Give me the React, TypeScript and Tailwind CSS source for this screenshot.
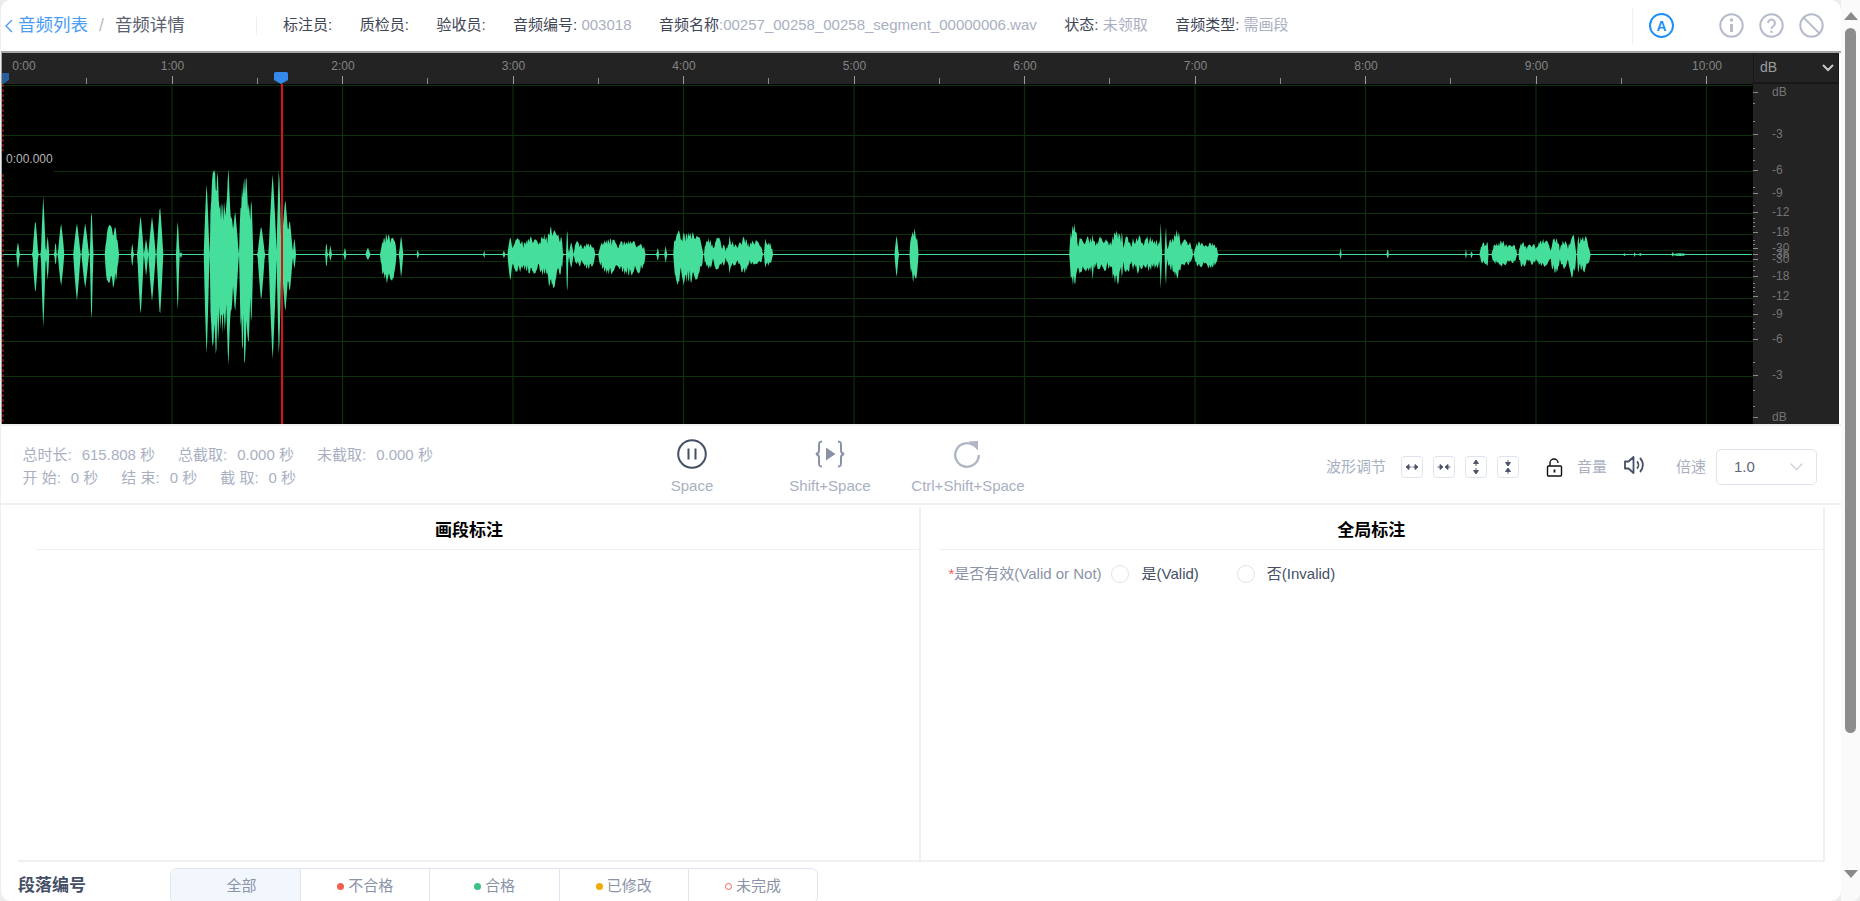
import type { ReactNode } from 'react'

const CENTER = 254.5

// bursts read off the wave: [x, half width, top, bottom], measured on the crops
const crop1 = [
  [48,4,333,420],[92,7,265,495],[112,6,197,595],[123,4,315,455],[143,3,330,410],[157,8,277,470],[197,9,278,515],
  [218,9,278,475],[234,4,224,597],[285,17,282,475],[337,3,335,415],[358,8,253,560],[372,5,325,440],[387,9,258,515],
  [407,8,222,565],[452,4,262,560],[460,3,365,385],[525,7,152,685],[547,14,112,680],[565,30,215,610],[580,8,105,720],
  [597,9,240,550],[622,14,128,705],[638,5,190,600],[663,9,285,515],[692,10,127,695],[708,6,100,695],[724,10,203,550],
  [735,8,265,490],[747,4,322,418],[828,3,332,418],[838,3,342,395],[875,3,350,395],[933,6,352,390],[985,20,312,458],
  [1017,5,315,445],[1059,2,355,390],[1227,2,360,385],[1277,3,360,385],[1293,7,318,455],[1313,13,325,425],
  [1345,18,322,432],[1378,12,315,435],[1398,12,292,473],[1416,8,310,440],[1437,3,285,510],[1447,6,335,415],
  [1465,8,330,410],[1490,13,340,415],[1545,22,325,430],
]
const crop2 = [
  [10,12,330,420],[30,28,333,437],[63,2,345,405],[98,3,350,395],[118,3,345,400],[148,8,300,460],[163,3,290,490],
  [180,25,305,455],[227,9,325,415],[250,9,322,420],[265,6,340,410],[280,3,305,442],[285,12,335,410],[315,12,322,428],
  [338,8,330,405],[350,10,330,405],[370,3,318,420],[378,8,335,405],[702,5,313,445],[746,8,298,455],[1150,8,282,470],
  [1170,8,320,440],[1185,22,322,425],[1198,3,302,462],[1222,14,318,425],[1240,8,335,415],[1258,11,300,460],
  [1272,4,298,450],[1285,8,320,430],[1300,6,322,420],[1315,10,315,430],[1340,12,318,420],[1358,10,330,415],
  [1370,3,275,480],[1383,3,282,475],[1397,8,325,420],[1410,10,303,445],[1433,14,330,405],[1468,10,332,412],[1495,15,337,415],
]
const crop3 = [
  [257,2,350,390],[376,2,350,390],[574,2,355,387],[588,2,360,388],[620,8,335,405],[628,3,325,417],[650,8,340,400],
  [665,12,332,410],[690,10,340,400],[718,8,335,412],[740,10,338,403],[770,15,328,410],[800,9,323,430],[822,8,330,415],
  [842,8,312,440],[858,3,306,440],[872,12,318,425],[882,4,340,405],[975,1,368,380],[1001,2,365,382],[1015,2,366,380],
  [1097,2,362,382],[1115,12,369,378],
]

const toBursts = (crop: number[][], offset: number, widen: number) =>
  crop.map((b) => [
    offset + b[0] / 2.529,
    (b[1] >= 8 ? b[1] * widen : b[1]) / 2.529,
    (373 - b[2]) / 3,
    (b[3] - 373) / 3,
  ])

const bursts = [
  ...toBursts(crop1.slice(0, 40), 0, 1),
  ...toBursts(crop1.slice(40), 0, 1.3),
  ...toBursts(crop2, 620, 1.3),
  ...toBursts(crop3, 1240, 1.3),
]

function rnd(x: number) {
  const n = Math.sin(x * 12.9898) * 43758.5453
  return n - Math.floor(n)
}

// jagged edge, spikes a few pixels wide
function rough(x: number) {
  const spike = Math.abs(Math.sin(x * 0.95 + Math.sin(x * 0.31) * 2.2))
  return 0.6 + 0.42 * spike + 0.14 * (rnd(x) - 0.5)
}

function wavePoints() {
  const top: string[] = []
  const bottom: string[] = []
  for (let x = 3; x <= 1753; x += 0.75) {
    let up = 0.6
    let down = 0.6
    for (const [cx, w, u, d] of bursts) {
      const t = Math.abs(x - cx) / Math.max(w, 0.8)
      if (t < 1) {
        const thin = w < 4
        const s = thin ? Math.pow(1 - t, 0.8) : Math.pow(1 - t * t, 0.45)
        up = Math.max(up, u * s * (thin ? 1 : rough(x)))
        down = Math.max(down, d * s * (thin ? 1 : rough(x + 1.7)))
      }
    }
    top.push(`${x - 3},${(CENTER - 84 - up).toFixed(1)}`)
    bottom.unshift(`${x - 3},${(CENTER - 84 + down).toFixed(1)}`)
  }
  return [...top, ...bottom].join(' ')
}

const WAVE = wavePoints()
const tick = (n: number) => 1 + 170.5 * n
const MINUTES = [0, 1, 2, 3, 4, 5, 6, 7, 8, 9, 10]
const GRID_Y = [85, 135, 171, 196, 213, 234, 250, 261, 277, 298, 316, 341, 376]
const DB_LABELS: [string, number][] = [
  ['dB', 92], ['-3', 134], ['-6', 170], ['-9', 193], ['-12', 212], ['-18', 232], ['-30', 248], ['-36', 254], ['-30', 259],
  ['-18', 276], ['-12', 296], ['-9', 314], ['-6', 339], ['-3', 375], ['dB', 417],
]
const DB_MINOR = [103, 121, 148, 160, 187, 205, 218, 222, 226, 240, 244, 266, 270, 283, 287, 291, 304, 322, 328, 362, 390, 406]

function Ruler() {
  return (
    <div className="relative h-[31px] bg-[#232323]">
      {MINUTES.map((m) => (
        <span
          key={m}
          className="absolute top-[5px] -translate-x-1/2 text-[12px] leading-[16px] text-[#838383]"
          style={{ left: m === 0 ? 22 : tick(m) - 1 }}
        >
          {m}:00
        </span>
      ))}
      {MINUTES.map((m) => (
        <i key={m} className="absolute bottom-0 h-[8px] w-px bg-[#9a9a9a]" style={{ left: tick(m) - 2 }} />
      ))}
      {MINUTES.slice(0, 10).map((m) => (
        <i key={m} className="absolute bottom-0 h-[6px] w-px bg-[#8a8a8a]" style={{ left: tick(m + 0.5) - 2 }} />
      ))}
      <svg className="absolute bottom-0 left-0" width="8" height="12" viewBox="0 0 8 12">
        <path d="M0 1h7v7l-6 4H0z" fill="#2a5d9c" />
      </svg>
      <svg className="absolute bottom-0 left-[272px]" width="14" height="12" viewBox="0 0 14 12">
        <path d="M1.5 0h11A1.5 1.5 0 0 1 14 1.5V8l-7 4-7-4V1.500A1.500 1.500 0 0 1 1.500 0z" fill="#338aea" />
      </svg>
    </div>
  )
}

function WaveCanvas() {
  return (
    <div className="relative h-[340px] bg-black">
      <svg width="1751" height="340" viewBox="0 0 1751 340" className="block">
        {GRID_Y.map((y) => (
          <line key={y} x1="0" x2="1751" y1={y - 84 + 0.5} y2={y - 84 + 0.5} stroke="#0b300b" strokeWidth="1.2" />
        ))}
        {MINUTES.slice(1).map((m) => (
          <line key={m} x1={tick(m) - 1.5} x2={tick(m) - 1.5} y1="0" y2="340" stroke="#0b300b" strokeWidth="1.2" />
        ))}
        <polygon points={WAVE} fill="#45de9a" />
        <line x1="1" x2="1" y1="0" y2="340" stroke="#d81e1e" strokeWidth="1" strokeDasharray="3 2" />
        <line x1="280" x2="280" y1="0" y2="340" stroke="#e01010" strokeWidth="2" />
      </svg>
      <span className="absolute left-0 top-[67px] h-[21px] w-[52px] bg-black pl-[4px] text-[12px] leading-[16px] text-[#b5b5b5]">
        0:00.000
      </span>
    </div>
  )
}

function DbAxis() {
  return (
    <div className="relative flex-1 bg-[#232323]">
      {DB_LABELS.map(([label, y], i) => (
        <span
          key={i}
          className="absolute left-[19px] -translate-y-1/2 text-[12px] leading-[14px] text-[#747474]"
          style={{ top: y - 84 }}
        >
          {label}
        </span>
      ))}
      {DB_LABELS.map(([, y], i) => (
        <i key={i} className="absolute left-0 h-px w-[5px] bg-[#8a8a8a]" style={{ top: y - 84 }} />
      ))}
      {DB_MINOR.map((y) => (
        <i key={y} className="absolute left-0 h-px w-[2px] bg-[#8a8a8a]" style={{ top: y - 84 }} />
      ))}
    </div>
  )
}

function Stat({ label, value }: { label: string; value: string }) {
  return (
    <span className="whitespace-pre">
      {label}:<span className="ml-[10px]">{value}</span>
    </span>
  )
}

function HeaderItem({ label, value, tight }: { label: string; value?: string; tight?: boolean }) {
  return (
    <span className="whitespace-pre text-[#3f4656]">
      {label}
      {tight ? '' : ':'}
      {value && (
        <span className="text-[#a9b0c2]">
          {tight ? ':' : ' '}
          {value}
        </span>
      )}
    </span>
  )
}

function AdjustButton({ d }: { d: string }) {
  return (
    <button className="flex h-[22px] w-[22px] items-center justify-center rounded-[4px] border border-[#dfe4f0] bg-white">
      <svg width="16" height="16" viewBox="0 0 16 16" fill="#4a5268" stroke="#4a5268" strokeWidth="0.9">
        <path d={d} />
      </svg>
    </button>
  )
}

function PlayButton({ label, children }: { label: string; children: ReactNode }) {
  return (
    <div className="flex w-[138px] flex-col items-center">
      <div className="flex h-[29px] items-center">{children}</div>
      <span className="mt-[8px] text-[15px] leading-[20px] text-[#a9b0c2]">{label}</span>
    </div>
  )
}

const TABS: { label: string; dot?: string }[] = [
  { label: '全部' },
  { label: '不合格', dot: 'bg-[#f4604f]' },
  { label: '合格', dot: 'bg-[#3dbf8a]' },
  { label: '已修改', dot: 'bg-[#f2a900]' },
  { label: '未完成', dot: 'border border-[#f4604f] bg-white' },
]

export default function App() {
  return (
    <div className="flex h-[901px] w-[1860px] overflow-hidden bg-[#ececec] font-['Liberation_Sans','Noto_Sans_CJK_SC',sans-serif] text-[15px]">
      <div className="flex h-[901px] w-[1841px] flex-col overflow-hidden rounded-[10px] border-l border-[#eeeeee] bg-white">
        {/* Header */}
        <div className="flex h-[51px] shrink-0 items-center">
          <div className="flex w-[255px] items-center text-[17.500px]">
            <svg className="ml-[3px]" width="10" height="16" viewBox="0 0 10 16" fill="none" stroke="#4a9df5" strokeWidth="1.4">
              <path d="M8 2 2 8l6 6" />
            </svg>
            <span className="ml-[4px] text-[#4a9df5]">音频列表</span>
            <span className="ml-[11px] text-[#b8bcc6]">/</span>
            <span className="ml-[11px] text-[#5a6070]">音频详情</span>
          </div>
          <div className="h-[18px] w-px bg-[#eceef2]" />
          <div className="ml-[26px] flex w-[1349px] gap-[27.500px]">
            <HeaderItem label="标注员" />
            <HeaderItem label="质检员" />
            <HeaderItem label="验收员" />
            <HeaderItem label="音频编号" value="003018" />
            <HeaderItem label="音频名称" value="00257_00258_00258_segment_00000006.wav" tight />
            <HeaderItem label="状态" value="未领取" />
            <HeaderItem label="音频类型" value="需画段" />
          </div>
          <div className="flex h-[36px] w-[208px] items-center border-l border-[#f0f1f4] pl-[16px]">
            <div className="flex h-[25px] w-[25px] items-center justify-center rounded-full border-2 border-[#1e8ff5] text-[14px] font-bold leading-none text-[#1e8ff5]">
              A
            </div>
            <svg className="ml-[45px]" width="25" height="25" viewBox="0 0 25 25" fill="none" stroke="#b6bccc" strokeWidth="2">
              <circle cx="12.500" cy="12.500" r="11.200" />
              <path d="M12.500 11v8" strokeWidth="3" />
              <circle cx="12.500" cy="7" r="1.800" fill="#b6bccc" stroke="none" />
            </svg>
            <svg className="ml-[15px]" width="25" height="25" viewBox="0 0 25 25" fill="none" stroke="#b6bccc" strokeWidth="2">
              <circle cx="12.500" cy="12.500" r="11.200" />
              <path d="M9 10a3.500 3.500 0 1 1 5.400 3c-1.300.9-1.900 1.500-1.900 3" />
              <circle cx="12.500" cy="18.800" r="1.300" fill="#b6bccc" stroke="none" />
            </svg>
            <svg className="ml-[15px]" width="25" height="25" viewBox="0 0 25 25" fill="none" stroke="#b6bccc" strokeWidth="2">
              <circle cx="12.500" cy="12.500" r="11.200" />
              <path d="m4.600 4.600 15.800 15.800" />
            </svg>
          </div>
        </div>

        {/* Wave */}
        <div className="-ml-px flex h-[373px] shrink-0 border-l-2 border-t-2 border-[#a6a6a6]">
          <div className="w-[1751px]">
            <Ruler />
            <WaveCanvas />
          </div>
          <div className="flex w-[86px] flex-col">
            <div className="flex h-[31px] items-center justify-between border-b-2 border-l border-r border-[#171717] bg-[#232323] pl-[6px] pr-[4px] text-[14px] text-[#9c9c9c]">
              dB
              <svg width="12" height="8" viewBox="0 0 12 8" fill="none" stroke="#c8c8c8" strokeWidth="2">
                <path d="m1 1 5 5 5-5" />
              </svg>
            </div>
            <DbAxis />
          </div>
        </div>

        {/* Controls */}
        <div className="flex h-[81px] shrink-0 border-y-2 border-[#f0f0f0]">
          <div className="w-[622px] pl-[21.500px] pt-[17px] text-[15px] leading-[23px] text-[#a9b0c2]">
            <div className="flex gap-[23px]">
              <Stat label="总时长" value="615.808 秒" />
              <Stat label="总截取" value="0.000 秒" />
              <Stat label="未截取" value="0.000 秒" />
            </div>
            <div className="flex gap-[23px]">
              <Stat label="开 始" value="0 秒" />
              <Stat label="结 束" value="0 秒" />
              <Stat label="截 取" value="0 秒" />
            </div>
          </div>
          <div className="flex pt-[13px]">
            <PlayButton label="Space">
              <svg width="30" height="30" viewBox="0 0 30 30" fill="none" stroke="#454f66" strokeWidth="2">
                <circle cx="15" cy="15" r="13.800" />
                <path d="M11.500 9.500v11M18.500 9.500v11" />
              </svg>
            </PlayButton>
            <PlayButton label="Shift+Space">
              <svg width="30" height="28" viewBox="0 0 30 28" fill="none" stroke="#8a92a8" strokeWidth="2">
                <path d="M7 1.500C4 1.500 4 3 4 6v4.500c0 2-1 3-3 3.500 2 .5 3 1.500 3 3.500V22c0 3 0 4.500 3 4.500" />
                <path d="M23 1.500c3 0 3 1.500 3 4.500v4.500c0 2 1 3 3 3.500-2 .5-3 1.500-3 3.500V22c0 3 0 4.500-3 4.500" />
                <path d="M11 7.500 20.500 14 11 20.500z" fill="#8a92a8" stroke="none" />
              </svg>
            </PlayButton>
            <PlayButton label="Ctrl+Shift+Space">
              <svg className="-ml-[3px]" width="28" height="28" viewBox="0 0 28 28" fill="none" stroke="#b0b6c6" strokeWidth="2.400">
                <path d="M21 5.500A11.800 11.800 0 1 0 25.800 15" />
                <path d="M15.500 1.500 25 1v9.500z" fill="#b0b6c6" stroke="none" />
              </svg>
            </PlayButton>
          </div>
          <div className="ml-auto flex items-center pr-[24px] pt-[5px]">
            <span className="text-[#a9b0c2]">波形调节</span>
            <div className="ml-[15px] flex gap-[10px]">
              <AdjustButton d="M2 8l3-2.500v5zM5 8h2.500M14 8l-3-2.500v5zM11 8H8.500" />
              <AdjustButton d="M7 8 4 5.500v5zM4 8H1.500M9 8l3-2.500v5zM12 8h2.500" />
              <AdjustButton d="M8 1 5.500 4.500h5zM8 4.500V7M8 15l-2.500-3.500h5zM8 11.500V9" />
              <AdjustButton d="M8 7 5.500 3.500h5zM8 3.500V1M8 9l-2.500 3.500h5zM8 12.500V15" />
            </div>
            <svg className="ml-[27px]" width="17" height="19" viewBox="0 0 17 19" fill="none" stroke="#111" strokeWidth="1.400">
              <rect x="1.500" y="8" width="14" height="10" rx="1" />
              <path d="M4 8V5a4 4 0 0 1 8 0" />
              <path d="M8.500 11.500v3" strokeWidth="1.800" />
            </svg>
            <span className="ml-[14px] text-[#a9b0c2]">音量</span>
            <svg className="ml-[17px] -mt-[4px]" width="22" height="20" viewBox="0 0 22 20" fill="none" stroke="#454f66" strokeWidth="1.800">
              <path d="M9.500 2v16l-5-4.500H1v-7h3.500z" strokeLinejoin="round" />
              <path d="M13 6.500a5 5 0 0 1 0 7" />
              <path d="M16 3a10 10 0 0 1 0 14" />
            </svg>
            <span className="ml-[30px] text-[#a9b0c2]">倍速</span>
            <div className="ml-[10px] flex h-[36px] w-[101px] items-center justify-between rounded-[5px] border border-[#dfe3ee] pl-[17px] pr-[13px] text-[#606776]">
              1.0
              <svg width="13" height="8" viewBox="0 0 13 8" fill="none" stroke="#c4c9d4" strokeWidth="1.200">
                <path d="m.7.7 5.800 6 5.800-6" />
              </svg>
            </div>
          </div>
        </div>

        {/* Panels */}
        <div className="ml-[17px] flex h-[357px] w-[1807px] shrink-0 border-b-2 border-[#f0f0f0] pt-[3px]">
          <div className="w-[903px] border-r-2 border-[#f0f0f0] pl-[18px]">
            <div className="h-[42px] border-b border-[#efefef] pr-[17px] pt-[11px] text-center text-[17px] font-bold leading-[24px] text-black">
              画段标注
            </div>
          </div>
          <div className="w-[904px] border-r-2 border-[#f0f0f0] pl-[17.500px]">
            <div className="h-[42px] border-b border-[#efefef] pr-[19px] pt-[11px] text-center text-[17px] font-bold leading-[24px] text-black">
              全局标注
            </div>
            <div className="ml-[10px] mt-[14px] flex items-center leading-[20px]">
              <span className="text-[#f4604f]">*</span>
              <span className="text-[#8a93a8]">是否有效(Valid or Not)</span>
              <span className="ml-[9px] h-[18px] w-[18px] rounded-full border border-[#dfe3ec]" />
              <span className="ml-[13px] text-[#454f66]">是(Valid)</span>
              <span className="ml-[38px] h-[18px] w-[18px] rounded-full border border-[#dfe3ec]" />
              <span className="ml-[12px] text-[#454f66]">否(Invalid)</span>
            </div>
          </div>
        </div>

        {/* Paragraph tabs */}
        <div className="flex flex-1 overflow-hidden pl-[17px] pt-[6px]">
          <span className="w-[152px] pt-[7px] text-[17px] font-bold leading-[22px] text-[#454f66]">段落编号</span>
          <div className="grid h-[36px] w-[648px] grid-cols-5 rounded-[7px] border border-[#dfe4f0]">
            {TABS.map((tab, i) => (
              <div
                key={tab.label}
                className={
                  i === 0
                    ? 'flex items-center justify-center gap-[4px] rounded-l-[7px] bg-[#f2f6fd] pl-[12px] text-[#8a93a8]'
                    : 'flex items-center justify-center gap-[4px] border-l border-[#dfe4f0] text-[#8a93a8]'
                }
              >
                {tab.dot && <i className={`h-[7px] w-[7px] rounded-full ${tab.dot}`} />}
                {tab.label}
              </div>
            ))}
          </div>
        </div>
      </div>

      {/* Scrollbar */}
      <div className="flex h-[901px] w-[19px] flex-col items-center rounded-br-[8px] bg-[#fafafa]">
        <svg className="mt-[12px]" width="14" height="8" viewBox="0 0 14 8">
          <path d="M7 0 14 8H0z" fill="#8a8a8a" />
        </svg>
        <div className="mt-[8px] h-[705px] w-[11px] rounded-full bg-[#8c8c8c]" />
        <svg className="mt-[137px]" width="14" height="8" viewBox="0 0 14 8">
          <path d="M0 0h14L7 8z" fill="#8a8a8a" />
        </svg>
      </div>
    </div>
  )
}
